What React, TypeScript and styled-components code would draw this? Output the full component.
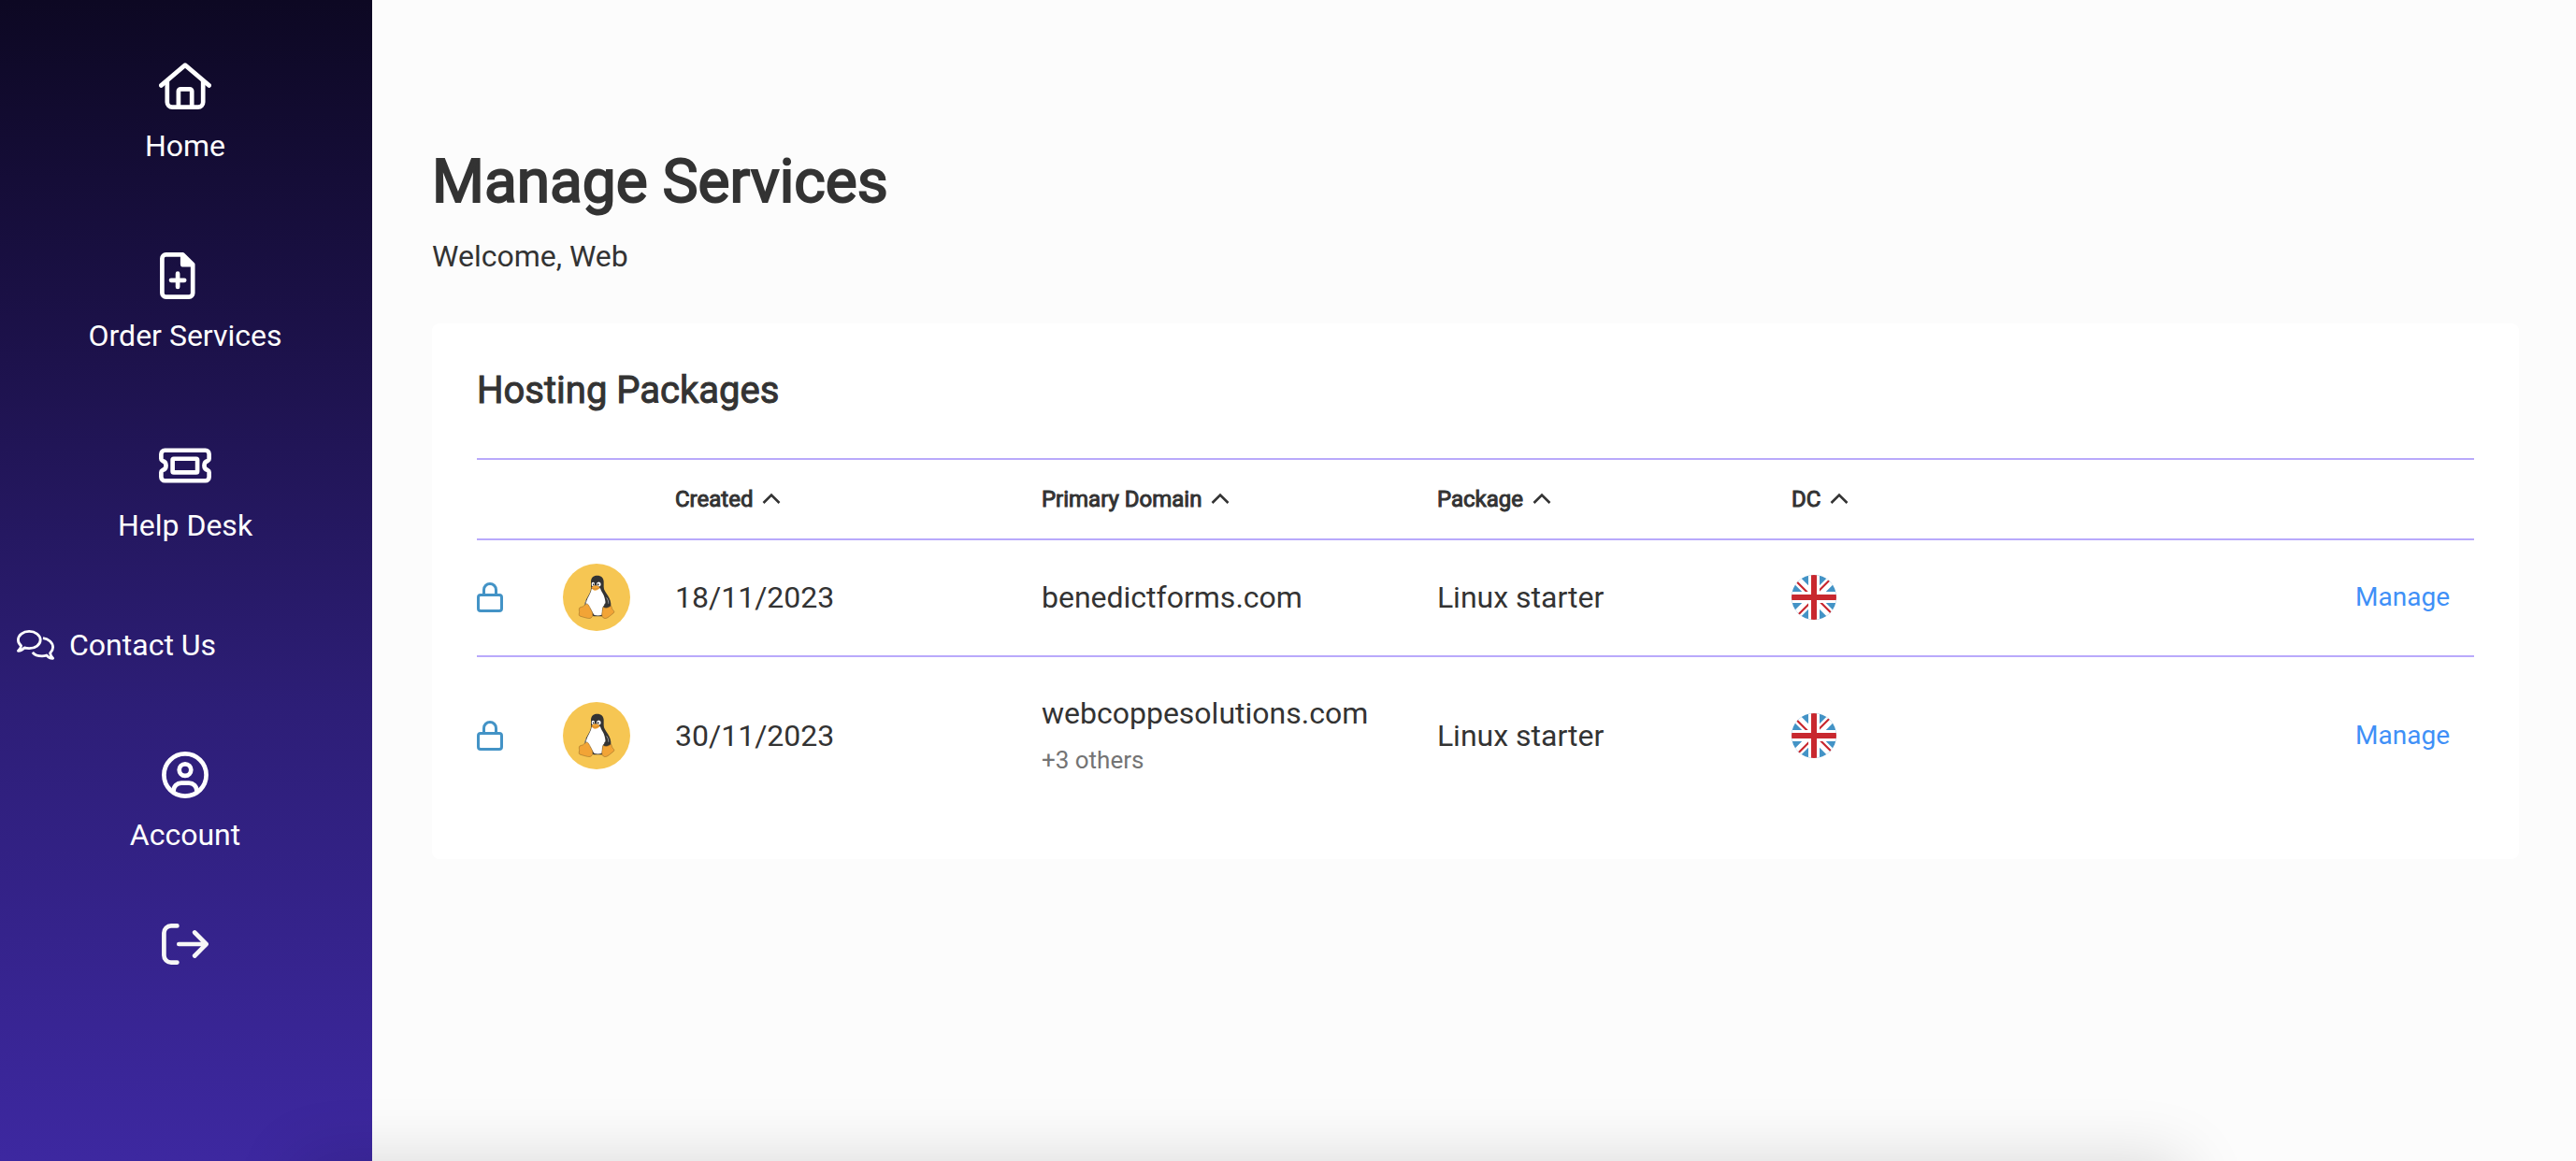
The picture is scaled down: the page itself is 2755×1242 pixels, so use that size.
import React from "react";
import styled, { createGlobalStyle } from "styled-components";

const GlobalStyle = createGlobalStyle`
  *, *::before, *::after { box-sizing: border-box; }
  body {
    margin: 0;
    background: #fcfcfc;
    color: #333;
    font-family: Roboto, "Liberation Sans", sans-serif;
    font-size: 32px;
    line-height: 38px;
  }
`;

const Shell = styled.div`
  position: relative;
  display: flex;
  min-height: 100vh;
  overflow: hidden;

  &::after {
    content: "";
    position: absolute;
    top: 100%;
    left: 320px;
    right: 420px;
    height: 100px;
    box-shadow: 0 0 70px rgba(0, 0, 0, 0.15);
    pointer-events: none;
  }
`;

const Sidebar = styled.nav`
  flex: none;
  width: 398px;
  padding: 67px 2px 0 0;
  background: linear-gradient(180deg, #0d0823 0%, #1d124c 31%, #2d1e77 61%, #3d28a0 100%);
`;

const NavList = styled.ul`
  display: flex;
  flex-direction: column;
  margin: 0;
  padding: 0;
  list-style: none;
`;

const NavItem = styled.li<{ $after?: number }>`
  padding-bottom: ${(p) => p.$after ?? 95}px;
`;

const NavLink = styled.a<{ $inline?: boolean }>`
  display: flex;
  flex-direction: ${(p) => (p.$inline ? "row" : "column")};
  align-items: center;
  gap: ${(p) => (p.$inline ? 16 : 20)}px;
  padding-left: ${(p) => (p.$inline ? 18 : 0)}px;
  color: #fff;
  text-decoration: none;
`;

const LogoutButton = styled.button`
  display: flex;
  justify-content: center;
  width: 100%;
  padding: 0;
  border: 0;
  background: none;
  color: #f7f7f7;
  cursor: pointer;
`;

const IconSlot = styled.span`
  display: flex;
  align-items: center;
  justify-content: center;
  height: 50px;
`;

const Main = styled.main`
  flex: 1;
  min-width: 0;
  padding: 157px 61px 64px 64px;
`;

const PageTitle = styled.h1`
  margin: 0;
  font-size: 64px;
  line-height: 75px;
  font-weight: 400;
  -webkit-text-stroke: 2px currentColor;
`;

const Welcome = styled.p`
  margin: 23px 0 0;
`;

const Card = styled.section`
  margin-top: 53px;
  padding: 48px;
  border-radius: 8px;
  background: #fff;
`;

const CardTitle = styled.h2`
  margin: 0 0 48px;
  font-size: 40px;
  line-height: 48px;
  font-weight: 400;
  -webkit-text-stroke: 1px currentColor;
`;

const Table = styled.table`
  width: 100%;
  table-layout: fixed;
  border-collapse: separate;
  border-spacing: 0;
  text-align: left;
`;

const Col = styled.col<{ $w?: string }>`
  width: ${(p) => p.$w ?? "auto"};
`;

const HeadCell = styled.th`
  height: 88px;
  padding: 0;
  border-top: 2px solid #b9a9fb;
  border-bottom: 2px solid #b9a9fb;
  font-weight: 400;
`;

const SortButton = styled.button`
  display: flex;
  align-items: center;
  gap: 10px;
  padding: 0;
  border: 0;
  background: none;
  color: inherit;
  font: inherit;
  font-size: 24px;
  line-height: 28px;
  -webkit-text-stroke: 1px currentColor;
  cursor: pointer;
`;

const Row = styled.tr`
  & > td {
    height: 125px;
    padding: 0 0 2px;
    border-bottom: 2px solid #b9a9fb;
    vertical-align: middle;
  }
  &:last-child > td {
    height: 168px;
    padding: 0;
    border-bottom: 0;
  }
  svg {
    display: block;
  }
`;

const Others = styled.div`
  margin-top: 14px;
  color: #747474;
  font-size: 26px;
  line-height: 34px;
`;

const ActionCell = styled.td`
  font-size: 28px;
  text-align: right;
`;

const ManageLink = styled.a`
  padding-right: 26px;
  color: #3f90f7;
  text-decoration: none;
`;

const stroke = {
  fill: "none",
  stroke: "currentColor",
  strokeWidth: 4.7,
  strokeLinecap: "round" as const,
  strokeLinejoin: "round" as const,
  "aria-hidden": true,
};

const HomeIcon = () => (
  <svg width="56" height="50" viewBox="0 0 56 50" {...stroke}>
    <path d="M2.4 24.4 28 2.6l25.6 21.8" />
    <path d="M8.8 20v22.2a5.4 5.4 0 0 0 5.4 5.4h27.6a5.4 5.4 0 0 0 5.4-5.4V20" />
    <path d="M20.9 47V30.6a2.3 2.3 0 0 1 2.3-2.3h9.7a2.3 2.3 0 0 1 2.3 2.3V47" />
  </svg>
);

const FileIcon = () => (
  <svg width="54" height="50" viewBox="0 0 54 50" {...stroke}>
    <path d="M24.5 2.4H6.4a4 4 0 0 0-4 4v37.2a4 4 0 0 0 4 4h24.8a4 4 0 0 0 4-4V13z" />
    <path
      d="M21.9 2v10.4a3.2 3.2 0 0 0 3.2 3.2H36v-4L26 2z"
      fill="currentColor"
      stroke="none"
    />
    <path d="M12 29.8h14.2M19.1 22.7v14.2" />
  </svg>
);

const TicketIcon = () => (
  <svg width="56" height="38" viewBox="0 0 56.7 38" {...stroke}>
    <path d="M6.4 2.6h43.9a4 4 0 0 1 4 4v5q0 1.6-1.5 2.4a5.2 5.2 0 0 0 0 10q1.5.8 1.5 2.4v5a4 4 0 0 1-4 4H6.4a4 4 0 0 1-4-4v-5q0-1.6 1.5-2.4a5.2 5.2 0 0 0 0-10q-1.5-.8-1.5-2.4v-5a4 4 0 0 1 4-4z" />
    <rect x="14.8" y="11.7" width="26.8" height="14.8" rx="1.2" />
  </svg>
);

const CommentsIcon = () => (
  <svg width="40" height="32" viewBox="0 0 40 32" {...stroke} strokeWidth={2.8}>
    <path d="M1.4 22.3c1.6-1.4 2.9-3.2 3.2-5.4C2.5 15 1.4 12.8 1.4 10.5 1.4 5.4 6.7 1.4 13.2 1.4S25.200 5.4 25.2 10.5s-5.5 9.200-12 9.200c-1.900 0-3.600-.3-5.100-.9-1.800 2.200-4.300 3.500-6.700 3.500z" />
    <path
      d="M28 8.700c6 .8 10.600 4.800 10.600 9.800 0 2.500-1.200 4.500-3 6.300.4 2.400 1.700 4.100 3 5.500-2.600.1-5.100-1.100-6.700-3.300-1.500.6-3.200.9-4.900.9-4.500 0-8.500-1.900-10.200-4.100"
      strokeLinecap="butt"
    />
  </svg>
);

const AccountIcon = () => (
  <svg width="50" height="50" viewBox="0 0 50 50" {...stroke}>
    <circle cx="25" cy="25" r="22.6" />
    <circle cx="25" cy="19.6" r="6.3" />
    <path d="M12.6 42c0-4.8 3.7-8.3 8.3-8.3h8.200c4.600 0 8.300 3.500 8.300 8.300" />
  </svg>
);

const LogoutIcon = () => (
  <svg width="50" height="44" viewBox="0 0 50 44" {...stroke}>
    <path d="M16.4 2.4H10a7.6 7.6 0 0 0-7.6 7.6v24A7.6 7.6 0 0 0 10 41.6h6.4" />
    <path d="M18.3 22h29M35.200 9.5 47.6 22 35.200 34.5" />
  </svg>
);

const LockIcon = () => (
  <svg
    width="28"
    height="32"
    viewBox="0 0 28 32"
    {...stroke}
    stroke="#4393c6"
    strokeWidth={3}
    role="img"
    aria-hidden={false}
    aria-label="Locked"
  >
    <rect x="1.5" y="13.5" width="25" height="17" rx="2.5" />
    <path d="M7.5 13V8a6.5 6.5 0 0 1 13 0v5" />
  </svg>
);

const ChevronIcon = () => (
  <svg
    width="20"
    height="16"
    viewBox="0 0 20 16"
    {...stroke}
    strokeWidth={2.6}
    strokeLinecap="butt"
    strokeLinejoin="miter"
  >
    <path d="M1.5 12 10 3.5 18.5 12" />
  </svg>
);

const LinuxIcon = () => (
  <svg width="72" height="72" viewBox="36 39 216 216" role="img" aria-label="Linux">
    <circle cx="144" cy="147" r="108" fill="#f6c653" />
    <path
      d="M146 77c-13 0-20 8-20 20v22c0 10-6 17-11 27-5 9-10 18-9 29l14 18 14 15h28l8-18 20-14c1-13-3-24-10-35-7-12-13-17-13-28V97c0-12-8-20-21-20z"
      fill="#333"
    />
    <path
      d="M128 119c-1 12-8 20-13 32-3 8-6 16-4 22l13 10 8 14 5 7c8 2 17 2 24-1l3-22c0-7 5-7 8-12 2-10-2-20-5-29-4-8-9-13-11-22z"
      fill="#fff"
    />
    <path d="M112 156c-4 7-5 12-3 17M176 148c5 7 7 13 6 20" fill="none" stroke="#ccc" strokeWidth="2" />
    <path d="M169 168c6-4 14-2 18 3l-6 8-11-1z" fill="#333" />
    <ellipse cx="133" cy="105" rx="5" ry="7" fill="#fff" />
    <ellipse cx="151" cy="105" rx="7" ry="7.5" fill="#fff" />
    <ellipse cx="134" cy="106" rx="2" ry="3.5" fill="#333" />
    <ellipse cx="149" cy="106" rx="2.5" ry="3.5" fill="#333" />
    <path d="M127 116c4-3 8-8 14-7 5 0 9 3 13 5l-1 5c-5 3-9 6-14 6-5-1-8-4-12-9z" fill="#f2a436" />
    <path d="M129 117c7 5 15 4 23-1" fill="none" stroke="#a8641c" strokeWidth="1.5" />
    <g fill="#f2a436" stroke="#8a6427" strokeWidth="1.5" strokeLinejoin="round">
      <path d="M90 180c6-3 10-2 14-6 4-5 8-9 13-4 5 6 7 13 11 20 4 8 5 13 2 19-4 6-8 6-15 5-8-2-17-4-25-7-4-3-2-8-1-13-1-5-2-10 1-14z" />
      <path d="M165 178c5 4 13 4 20 0l5-4c4 5 2 9 7 14 3 3 5 5 2 9-5 5-10 7-15 12-5 4-12 8-18 4-6-4-5-12-4-19 1-6 1-11 3-16z" />
    </g>
  </svg>
);

const UkFlag = ({ id }: { id: string }) => (
  <svg width="48" height="48" viewBox="0 0 48 48" role="img" aria-label="United Kingdom">
    <clipPath id={id}>
      <circle cx="24" cy="24" r="24" />
    </clipPath>
    <g clipPath={`url(#${id})`}>
      <path fill="#4393c6" d="M0 0h48v48H0z" />
      <path stroke="#fff" strokeWidth="9.6" d="M0 0l48 48M48 0 0 48" />
      <path
        stroke="#c8282f"
        strokeWidth="2.2"
        d="M5.5 7.2 17.5 19.200M41 5.300 29 17.300M7 42.700 19 30.700M42.500 40.800 30 28.300"
      />
      <path stroke="#fff" strokeWidth="12" d="M24 0v48M0 24h48" />
      <path stroke="#c8282f" strokeWidth="6" d="M24 0v48M0 24h48" />
    </g>
  </svg>
);

const columns = ["Created", "Primary Domain", "Package", "DC"];

const packages = [
  { created: "18/11/2023", domain: "benedictforms.com", plan: "Linux starter" },
  { created: "30/11/2023", domain: "webcoppesolutions.com", others: "+3 others", plan: "Linux starter" },
];

const navigation = [
  { label: "Home", icon: <HomeIcon /> },
  { label: "Order Services", icon: <FileIcon /> },
  { label: "Help Desk", icon: <TicketIcon />, after: 90 },
  { label: "Contact Us", icon: <CommentsIcon />, inline: true },
  { label: "Account", icon: <AccountIcon />, after: 73 },
];

export default function App() {
  return (
    <>
      <GlobalStyle />
      <Shell>
        <Sidebar aria-label="Main">
          <NavList>
            {navigation.map((item) => (
              <NavItem key={item.label} $after={item.after}>
                <NavLink href="#" $inline={item.inline}>
                  {item.inline ? item.icon : <IconSlot>{item.icon}</IconSlot>}
                  <span>{item.label}</span>
                </NavLink>
              </NavItem>
            ))}
            <NavItem>
              <LogoutButton type="button" aria-label="Log out">
                <IconSlot>
                  <LogoutIcon />
                </IconSlot>
              </LogoutButton>
            </NavItem>
          </NavList>
        </Sidebar>
        <Main>
          <PageTitle>Manage Services</PageTitle>
          <Welcome>Welcome, Web</Welcome>
          <Card>
            <CardTitle>Hosting Packages</CardTitle>
            <Table>
              <colgroup>
                <Col $w="92px" />
                <Col $w="120px" />
                <Col $w="18.35%" />
                <Col $w="19.8%" />
                <Col $w="17.75%" />
                <Col />
                <Col $w="200px" />
              </colgroup>
              <thead>
                <tr>
                  <HeadCell aria-label="Lock" />
                  <HeadCell aria-label="Platform" />
                  {columns.map((name) => (
                    <HeadCell key={name} scope="col">
                      <SortButton type="button">
                        {name}
                        <ChevronIcon />
                      </SortButton>
                    </HeadCell>
                  ))}
                  <HeadCell aria-label="Actions" />
                </tr>
              </thead>
              <tbody>
                {packages.map((p, i) => (
                  <Row key={p.domain}>
                    <td>
                      <LockIcon />
                    </td>
                    <td>
                      <LinuxIcon />
                    </td>
                    <td>{p.created}</td>
                    <td>
                      {p.domain}
                      {p.others && <Others>{p.others}</Others>}
                    </td>
                    <td>{p.plan}</td>
                    <td>
                      <UkFlag id={`flag-${i}`} />
                    </td>
                    <ActionCell>
                      <ManageLink href="#">Manage</ManageLink>
                    </ActionCell>
                  </Row>
                ))}
              </tbody>
            </Table>
          </Card>
        </Main>
      </Shell>
    </>
  );
}
